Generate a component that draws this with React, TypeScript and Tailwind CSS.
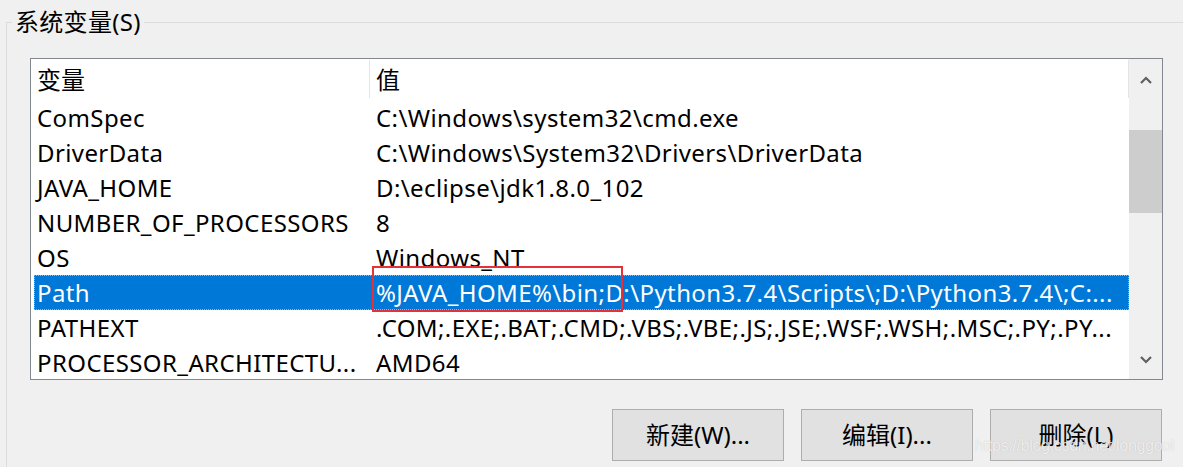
import React from "react";

const rows: { name: string; value: string; selected?: boolean }[] = [
  { name: "ComSpec", value: "C:\\Windows\\system32\\cmd.exe" },
  { name: "DriverData", value: "C:\\Windows\\System32\\Drivers\\DriverData" },
  { name: "JAVA_HOME", value: "D:\\eclipse\\jdk1.8.0_102" },
  { name: "NUMBER_OF_PROCESSORS", value: "8" },
  { name: "OS", value: "Windows_NT" },
  {
    name: "Path",
    value: "%JAVA_HOME%\\bin;D:\\Python3.7.4\\Scripts\\;D:\\Python3.7.4\\;C:...",
    selected: true,
  },
  { name: "PATHEXT", value: ".COM;.EXE;.BAT;.CMD;.VBS;.VBE;.JS;.JSE;.WSF;.WSH;.MSC;.PY;.PY..." },
  { name: "PROCESSOR_ARCHITECTU...", value: "AMD64" },
];

function Chevron({ down }: { down?: boolean }) {
  return (
    <svg width="12" height="8" viewBox="0 0 12 8" className={down ? "rotate-180" : ""}>
      <path d="M1 7 L6 2 L11 7" fill="none" stroke="#606060" strokeWidth="2.2" />
    </svg>
  );
}

export default function App() {
  return (
    <div
      className="relative w-[1183px] h-[467px] overflow-hidden bg-[#f0f0f0] text-black"
      style={{ fontFamily: '"Noto Sans", "Noto Sans CJK SC", sans-serif' }}
    >
      <div className="relative ml-[6px] mt-[22px] h-[445px] border-l border-t border-[#dcdcdc] pl-[23px] pt-[35px]">
        <div className="absolute left-[5px] top-[-16px] bg-[#f0f0f0] px-[3px] text-[24px] leading-[30px] tracking-[0.3px]">
          系统变量(S)
        </div>

        <div className="flex h-[322px] w-[1133px] border border-[#828790] bg-white">
          <div className="relative flex-1 overflow-hidden">
            <div className="flex h-[41px] items-center text-[24px]">
              <div className="flex h-full w-[338px] items-center pl-[6px]">变量</div>
              <div className="mt-[1px] h-[38px] w-px self-start bg-[#e5e5e5]" />
              <div className="flex h-full flex-1 items-center pl-[6px]">值</div>
              <div className="mt-[1px] h-[38px] w-px self-start bg-[#e5e5e5]" />
            </div>
            {rows.map((r) => (
              <div
                key={r.name}
                className={
                  "flex h-[35px] items-center whitespace-nowrap text-[24px] tracking-[0.4px] " +
                  (r.selected
                    ? "ml-[3px] bg-[#0078d7] text-white outline-1 outline-dotted outline-[#f5a04a] -outline-offset-1"
                    : "ml-[3px]")
                }
              >
                <div className="w-[335px] overflow-hidden pl-[3px]">{r.name}</div>
                <div className="flex-1 overflow-hidden pl-[7px]">{r.value}</div>
              </div>
            ))}
            <div className="absolute left-[341px] top-[207px] h-[46px] w-[251px] border-2 border-[#e53238]" />
          </div>
          <div className="flex w-[33px] flex-col bg-[#f0f0f0]">
            <div className="flex h-[41px] items-center justify-center">
              <Chevron />
            </div>
            <div className="mt-[30px] h-[83px] bg-[#cdcdcd]" />
            <div className="flex-1" />
            <div className="flex h-[38px] items-center justify-center">
              <Chevron down />
            </div>
          </div>
        </div>

        <div className="mt-[29px] flex w-[1133px] justify-end gap-[17px] pr-[1px]">
          {["新建(W)...", "编辑(I)...", "删除(L)"].map((t) => (
            <div
              key={t}
              className="flex h-[52px] w-[172px] items-center justify-center border border-[#adadad] bg-[#e1e1e1] text-[24px]"
            >
              {t}
            </div>
          ))}
        </div>
      </div>

      <div
        className="absolute left-[975px] top-[437px] whitespace-nowrap text-[16px] leading-[18px] tracking-[-0.3px] text-white/75"
        style={{ fontFamily: '"Liberation Sans", Arial, sans-serif', textShadow: "0 0 1px rgba(0,0,0,0.2)" }}
      >
        https://blog.csdn.net/longgool
      </div>
    </div>
  );
}
